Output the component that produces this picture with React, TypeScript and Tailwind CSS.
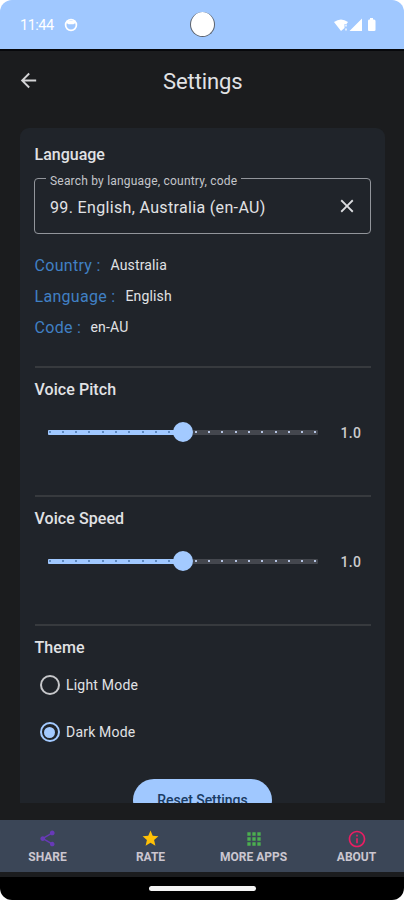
import React from "react";
import { MdApps, MdArrowBack, MdClose, MdInfoOutline, MdShare, MdStar } from "react-icons/md";

const ticks = Array.from({ length: 21 }, (_, i) => i);

function StatusBar() {
  return (
    <div className="flex h-[49px] shrink-0 items-center rounded-t-[12px] bg-[#a0c8ff] px-[20px] text-white">
      <div className="flex w-[170px] shrink-0 items-center">
        <span className="pt-[2px] text-[14.500px] leading-5 tracking-[-0.5px]">11:44</span>
        <svg className="ml-[10px] h-[14px] w-[14px]" viewBox="0 0 14 14">
          <circle cx="7" cy="7" r="5.4" fill="none" stroke="white" strokeWidth="1.7" />
          <path d="M2.500 2.800h9V5L9.500 6.300H4.500L2.500 5z" fill="white" />
        </svg>
      </div>
      <div className="mb-px h-[25px] w-[25px] shrink-0 rounded-full border-b-[1.5px] border-l border-r border-[#59606c] bg-white" />
      <svg className="ml-auto mr-[6px] h-[16px] w-[44px] shrink-0" viewBox="0 0 44 16" fill="white">
        <path d="M0 5Q7 0 14 5L12.500 7H10.500v4L7 14z" />
        <path d="M11 7.500h2v2h-2zM11 11.500h2v2h-2z" opacity=".65" />
        <path d="M28 1.500V14H15.500zM35 2.500h1V1h3v1.500h1q1.500 0 1.500 1.500v9q0 1-1.500 1h-5q-1 0-1-1V4q0-1.500 1-1.500z" />
      </svg>
    </div>
  );
}

function Info({ label, value, className }: { label: string; value: string; className: string }) {
  return (
    <div className="flex h-[31px] items-center">
      <span className={`text-[16px] tracking-[0.3px] text-[#4080c4] ${className}`}>{label} :</span>
      <span className="text-[14px] tracking-[0.15px] text-[#e1e2e5]">{value}</span>
    </div>
  );
}

function Slider() {
  return (
    <div className="mt-[20px] flex h-[22px] items-center pl-[13px]">
      <div className="grid w-[270px] items-center">
        <div className="col-start-1 row-start-1 flex h-[5px] overflow-hidden rounded-[1px] bg-[#44474e]">
          <div className="w-1/2 bg-[#a0c8ff]" />
        </div>
        <div className="z-10 col-start-1 row-start-1 flex justify-between px-[1px]">
          {ticks.map((i) => (
            <span key={i} className={`h-[2px] w-[2px] ${i < 10 ? "rounded-full bg-[#4a76ab]" : "bg-[#b4c3e2]"}`} />
          ))}
        </div>
        <div className="z-20 col-start-1 row-start-1 h-[20px] w-[20px] justify-self-center rounded-full bg-[#a3caff]" />
      </div>
      <span className="ml-[23px] pt-[2px] text-[14px] font-medium tracking-[0.3px] text-[#cbcbce]">1.0</span>
    </div>
  );
}

function Voice({ title }: { title: string }) {
  return (
    <section className="h-[129px] border-t-2 border-[#373a3e] pt-[11px]">
      <h2 className="text-[16px] leading-[22px] font-medium tracking-[0.07px]">{title}</h2>
      <Slider />
    </section>
  );
}

function Radio({ label, on }: { label: string; on?: boolean }) {
  return (
    <div className="flex h-[47px] items-center pl-[5px]">
      <span className={`mb-px flex h-[20px] w-[20px] items-center justify-center rounded-full border-2 ${on ? "border-[#a3caff]" : "border-[#c6c7ca]"}`}>
        {on && <span className="h-[11px] w-[11px] rounded-full bg-[#a3caff]" />}
      </span>
      <span className="ml-[6.500px] text-[14px] tracking-[0.2px]">{label}</span>
    </div>
  );
}

function NavItem({ label, children }: { label: string; children: React.ReactNode }) {
  return (
    <div className="flex w-[103px] shrink-0 flex-col items-center pt-[9px]">
      {children}
      <span className="text-[12px] leading-[18px] font-bold text-[#cbc6d0]">{label}</span>
    </div>
  );
}

export default function App() {
  return (
    <div className="h-[900px] w-[404px] overflow-hidden bg-white font-['Roboto','Liberation_Sans',sans-serif] text-[#e1e2e5]">
      <div className="flex h-[900px] flex-col rounded-[12px]">
        <StatusBar />
        <div className="h-[2px] shrink-0 bg-[#07080b]" />
        <main className="flex h-[769px] shrink-0 flex-col bg-[#1b1c1e]">
          <header className="flex h-[60px] items-center pl-[17px]">
            <MdArrowBack className="mb-[2px] h-[23px] w-[23px] text-[#d4d4d6]" />
            <h1 className="ml-[123px] pt-px text-[22px] leading-7 tracking-[-0.1px] text-[#e1e2e5]">Settings</h1>
          </header>
          <div className="mx-[20px] mt-[17px] h-[675px] w-[365px] overflow-hidden rounded-t-[9px] bg-[#20242a] px-[14.500px] pt-[16px]">
            <h2 className="text-[16px] leading-[22px] font-medium tracking-[0px]">Language</h2>
            <fieldset className="-ml-[0.500px] mt-[6px] h-[62px] w-[337px] rounded-[4px] border border-[#92959b] px-[11px]">
              <legend className="px-[4px] text-[12px] leading-[13px] tracking-[0.2px] text-[#c4c6cb]"><span className="block translate-y-[3px]">Search by language, country, code</span></legend>
              <div className="flex h-[42px] items-center justify-between pl-[4px]">
                <span className="pt-[4px] text-[16px] tracking-[0.34px]">99. English, Australia (en-AU)</span>
                <MdClose className="mr-px h-[22px] w-[22px] text-[#dcdde0]" />
              </div>
            </fieldset>
            <div className="mt-[16px] h-[116px]">
              <Info label="Country" value="Australia" className="w-[76px]" />
              <Info label="Language" value="English" className="w-[91px]" />
              <Info label="Code" value="en-AU" className="w-[56px]" />
            </div>
            <Voice title="Voice Pitch" />
            <Voice title="Voice Speed" />
            <section className="border-t-2 border-[#373a3e] pt-[11px]">
              <h2 className="text-[16px] leading-[22px] font-medium tracking-[0.07px]">Theme</h2>
              <div className="mt-[3px]">
                <Radio label="Light Mode" />
                <Radio label="Dark Mode" on />
              </div>
            </section>
            <button className="mx-auto mt-[23px] block h-[42px] w-[139px] rounded-full bg-[#a0c8ff] text-[14px] font-medium tracking-[-0.05px] text-[#193b63]">Reset Settings</button>
          </div>
        </main>
        <nav className="flex h-[52px] shrink-0 justify-center bg-[#3b4657]">
          <NavItem label="SHARE"><MdShare className="h-[19px] w-[19px] text-[#673ab7]" /></NavItem>
          <NavItem label="RATE"><MdStar className="h-[19px] w-[19px] text-[#ffc107]" /></NavItem>
          <NavItem label="MORE APPS"><MdApps className="-mb-px h-[20px] w-[20px] text-[#4caf50]" /></NavItem>
          <NavItem label="ABOUT"><MdInfoOutline className="-mb-px h-[20px] w-[20px] text-[#e91e63]" /></NavItem>
        </nav>
        <div className="h-[5px] shrink-0 bg-[#1b1c1e]" />
        <footer className="flex h-[23px] shrink-0 justify-center rounded-b-[12px] bg-black pt-[9px]">
          <div className="h-[5px] w-[107px] rounded-full bg-[#f4f4f4]" />
        </footer>
      </div>
    </div>
  );
}
